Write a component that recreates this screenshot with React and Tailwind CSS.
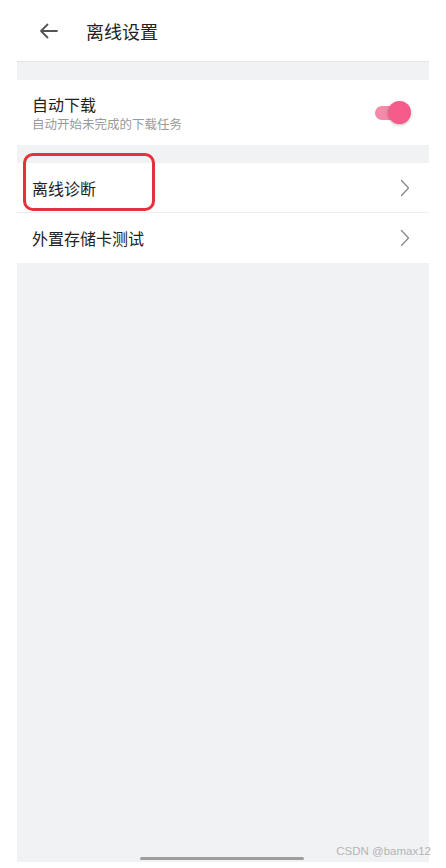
import React from "react";

const Chevron = () => (
    <svg width="10" height="18" viewBox="0 0 10 18" fill="none">
        <path d="M1.5 1.5 L8.5 9 L1.5 16.5" stroke="#8a8a8a" strokeWidth="1.3" strokeLinecap="round" strokeLinejoin="round" />
    </svg>
);

const App = () => {
    return (
        <div
            className="relative w-[446px] h-[868px] bg-white flex flex-col overflow-hidden text-[#222]"
            style={{ fontFamily: '"Noto Sans CJK SC", "Noto Sans", sans-serif' }}
        >
            {/* Header */}
            <div className="h-[61px] flex items-center pl-[39px] shrink-0">
                <svg width="19" height="16" viewBox="0 0 19 16" fill="none">
                    <path d="M18 8 H2 M8.5 1.5 L2 8 L8.5 14.5" stroke="#555" strokeWidth="1.8" strokeLinecap="round" strokeLinejoin="round" />
                </svg>
                <span className="ml-[28px] text-[18px] leading-none">离线设置</span>
            </div>

            {/* Content */}
            <div className="mx-[17px] flex-1 mb-[6px] bg-[#f1f2f4] border-t border-[#e4e5e7] flex flex-col">
                <div className="h-[18px]" />

                <div className="h-[65px] bg-white flex items-center justify-between pl-[15px] pr-[18px]">
                    <div className="flex flex-col gap-[4px]">
                        <span className="text-[16px] leading-[18px]">自动下载</span>
                        <span className="text-[12.5px] leading-[14px] text-[#9a9a9a]">自动开始未完成的下载任务</span>
                    </div>
                    <div className="relative w-[36px] h-[24px] flex items-center">
                        <div className="w-[30px] h-[14px] rounded-full bg-[#f28aa8]" />
                        <div className="absolute right-0 top-0 w-[23px] h-[23px] rounded-full bg-[#f65c8b] shadow-[0_1px_3px_rgba(0,0,0,0.25)]" />
                    </div>
                </div>

                <div className="h-[18px]" />

                <div className="bg-white">
                    <div className="h-[50px] flex items-center justify-between pl-[15px] pr-[19px] border-b border-[#ededed]">
                        <span className="text-[16px]">离线诊断</span>
                        <Chevron />
                    </div>
                    <div className="h-[50px] flex items-center justify-between pl-[15px] pr-[19px]">
                        <span className="text-[16px]">外置存储卡测试</span>
                        <Chevron />
                    </div>
                </div>
            </div>

            {/* Highlight annotation */}
            <div className="absolute left-[23px] top-[153px] w-[132px] h-[58px] border-[3px] border-[#e3323c] rounded-[10px]" />

            {/* Home indicator */}
            <div className="absolute left-[140px] top-[857px] w-[164px] h-[3px] rounded-full bg-[#9e9e9e]" />

            {/* Watermark */}
            <div
                className="absolute right-[15px] top-[846px] text-[11.5px] leading-none text-[#b4b4b4]"
                style={{ fontFamily: '"Liberation Sans", sans-serif' }}
            >
                CSDN @bamax12
            </div>
        </div>
    );
};

export default App;
